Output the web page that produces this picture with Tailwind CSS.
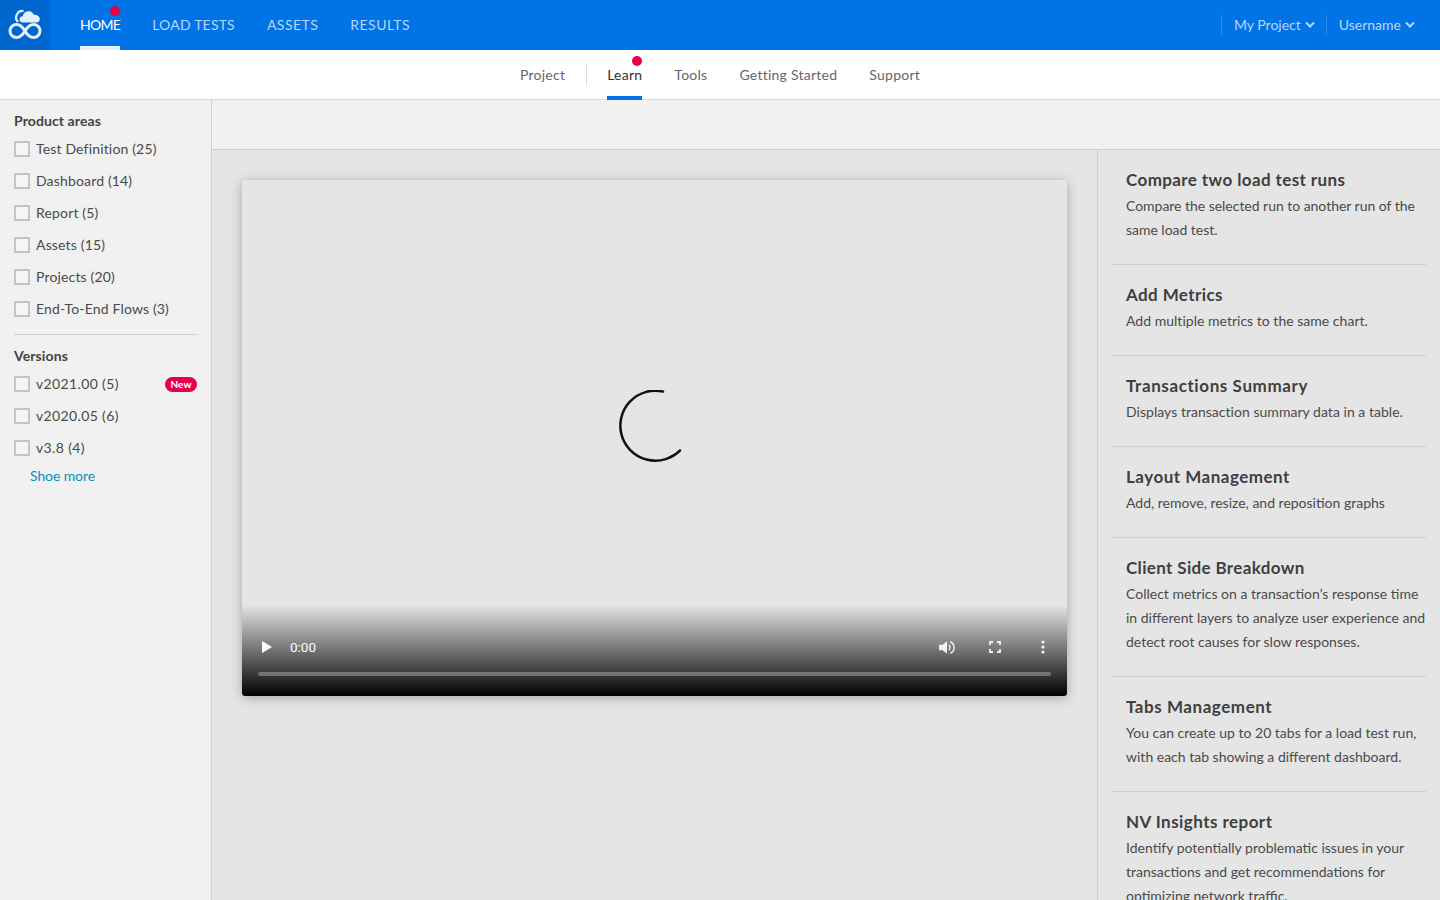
<!DOCTYPE html>
<html lang="en">
<head>
  <meta charset="UTF-8" />
  <title>Learn</title>
  <script src="https://cdn.jsdelivr.net/npm/@tailwindcss/browser@4"></script>
</head>
<body class="h-screen overflow-hidden bg-[#e5e5e5] font-['Lato',sans-serif] text-[#4a4a4a]">

  <!-- Top bar -->
  <header class="h-[50px] bg-[#0073e7] flex items-center text-[14px] text-[#b9d6f7]">
    <div class="w-[50px] h-full bg-[#0067cf]">
      <svg width="50" height="50" viewBox="0 0 50 50" fill="none">
        <path d="M18 22a6.500 6.500 0 0 1 5.500-11" stroke="#e6f0fc" stroke-width="2.200"/>
        <path d="M23 22.500c-2.500 0-3.500-1.500-3.500-3 0-2 1.500-3.200 3.200-3.200 .5-3.300 3.300-5.300 6.300-5 2.400.2 4 1.600 4.800 3.500 3-.3 6 1.500 6 4.300 0 2-1.300 3.400-3.300 3.400z" fill="#e6f0fc"/>
        <path d="M25 31c-3-5-5-6.500-8.500-6.500a6.500 6.500 0 0 0 0 13c3.500 0 5.500-1.500 8.500-6.500s5-6.500 8.500-6.500a6.500 6.500 0 0 1 0 13c-3.500 0-5.500-1.500-8.500-6.500z" stroke="#e6f0fc" stroke-width="3"/>
      </svg>
    </div>
    <nav class="flex ml-[30px] gap-8 h-full">
      <a class="relative h-full flex items-center text-white border-b-4 border-[#e6f0fc] pt-[2px] tracking-[-0.7px]">HOME
        <span class="absolute top-[6px] right-0 w-[10px] h-[10px] rounded-full bg-[#e5004c]"></span>
      </a>
      <a class="flex items-center pb-[2px] tracking-[0.2px]">LOAD TESTS</a>
      <a class="flex items-center pb-[2px] tracking-[0.45px]">ASSETS</a>
      <a class="flex items-center pb-[2px] tracking-[0.5px]">RESULTS</a>
    </nav>
    <div class="ml-auto flex items-center pr-[25px]">
      <div class="flex items-center gap-1 h-5 border-l border-[#2a8bee] pl-3 pr-[11px] pb-[2px]">My Project
        <svg width="10" height="7" viewBox="0 0 10 7" fill="none"><path d="M1 1.500l4 4 4-4" stroke="#b9d6f7" stroke-width="2"/></svg>
      </div>
      <div class="flex items-center gap-1 h-5 border-l border-[#2a8bee] pl-3 pb-[2px]">Username
        <svg width="10" height="7" viewBox="0 0 10 7" fill="none"><path d="M1 1.500l4 4 4-4" stroke="#b9d6f7" stroke-width="2"/></svg>
      </div>
    </div>
  </header>

  <!-- Sub navigation -->
  <div class="h-[50px] bg-white border-b border-[#dcdcdc] flex justify-center text-[14px] text-[#656668] tracking-[0.25px]">
    <a class="flex items-center">Project</a>
    <div class="self-center w-px h-[22px] bg-[#dcdcdc] ml-[21px] mr-5"></div>
    <a class="relative flex items-center text-[#333333] border-b-4 border-[#0073e7] pt-[3px] -mb-px">Learn
      <span class="absolute top-[6px] right-0 w-[10px] h-[10px] rounded-full bg-[#e5004c]"></span>
    </a>
    <a class="flex items-center ml-8">Tools</a>
    <a class="flex items-center ml-8">Getting Started</a>
    <a class="flex items-center ml-8">Support</a>
  </div>

  <div class="flex h-[800px]">
    <!-- Filters -->
    <aside class="w-[212px] shrink-0 bg-[#f1f1f1] border-r border-[#d0d0d0] px-[14px] text-[14px]">
      <h3 class="mt-[11px] h-5 leading-5 font-bold text-[#434343] text-[14px] tracking-[0.1px]">Product areas</h3>
      <div class="mt-[2px] tracking-[0.16px]">
        <label class="flex items-center h-8 gap-[6px]"><span class="w-4 h-4 border-2 border-[#c4c4c4] bg-[#f5f5f5]"></span><span class="pb-[2px]">Test Definition (25)</span></label>
        <label class="flex items-center h-8 gap-[6px]"><span class="w-4 h-4 border-2 border-[#c4c4c4] bg-[#f5f5f5]"></span><span class="pb-[2px]">Dashboard (14)</span></label>
        <label class="flex items-center h-8 gap-[6px]"><span class="w-4 h-4 border-2 border-[#c4c4c4] bg-[#f5f5f5]"></span><span class="pb-[2px]">Report (5)</span></label>
        <label class="flex items-center h-8 gap-[6px]"><span class="w-4 h-4 border-2 border-[#c4c4c4] bg-[#f5f5f5]"></span><span class="pb-[2px]">Assets (15)</span></label>
        <label class="flex items-center h-8 gap-[6px]"><span class="w-4 h-4 border-2 border-[#c4c4c4] bg-[#f5f5f5]"></span><span class="pb-[2px]">Projects (20)</span></label>
        <label class="flex items-center h-8 gap-[6px]"><span class="w-4 h-4 border-2 border-[#c4c4c4] bg-[#f5f5f5]"></span><span class="pb-[2px]">End-To-End Flows (3)</span></label>
      </div>
      <div class="mt-[9px] border-t border-[#d0d0d0]"></div>
      <h3 class="mt-[11px] h-5 leading-5 font-bold text-[#434343] text-[14px] tracking-[0.1px]">Versions</h3>
      <div class="mt-[2px] tracking-[0.36px]">
        <label class="flex items-center h-8 gap-[6px]"><span class="w-4 h-4 border-2 border-[#c4c4c4] bg-[#f5f5f5]"></span><span class="pb-[2px]">v2021.00 (5)</span>
          <span class="ml-auto h-[15px] w-8 rounded-full bg-[#e5004c] text-white text-[10px] font-bold leading-[15px] text-center tracking-normal">New</span>
        </label>
        <label class="flex items-center h-8 gap-[6px]"><span class="w-4 h-4 border-2 border-[#c4c4c4] bg-[#f5f5f5]"></span><span class="pb-[2px]">v2020.05 (6)</span></label>
        <label class="flex items-center h-8 gap-[6px]"><span class="w-4 h-4 border-2 border-[#c4c4c4] bg-[#f5f5f5]"></span><span class="pb-[2px]">v3.8 (4)</span></label>
      </div>
      <a class="block ml-4 h-6 leading-6 text-[#0b8eb8] tracking-[-0.1px]">Shoe more</a>
    </aside>

    <div class="flex-1 min-w-0 flex flex-col">
      <div class="h-[50px] shrink-0 bg-[#f1f1f1] border-b border-[#d0d0d0]"></div>
      <div class="flex flex-1 min-h-0">
        <!-- Video -->
        <main class="flex-1 min-w-0 px-[30px] pt-[30px]">
          <div class="relative h-[516px] rounded-[3px] bg-[#e5e5e5] shadow-[0_2px_12px_rgba(0,0,0,0.28)] overflow-hidden">
            <div class="h-[490px] flex items-center justify-center pr-[1px]">
              <svg width="72" height="72" viewBox="0 0 72 72" fill="none" class="mt-[1px] ml-[2px]">
                <path d="M44 1.500A35 35 0 1 0 61 60.500" stroke="#111" stroke-width="2.500" stroke-linecap="round"/>
              </svg>
            </div>
            <div class="absolute inset-x-0 bottom-0 h-[91px] bg-gradient-to-b from-black/0 to-black">
              <div class="flex items-center h-[20px] mt-[32px] pl-5 pr-4 text-white text-[13.500px] font-['Roboto',sans-serif]">
                <svg width="10" height="12" viewBox="0 0 10 12"><path d="M0 0l10 6-10 6z" fill="#fff"/></svg>
                <span class="ml-[18px]">0:00</span>
                <svg class="ml-auto" width="16" height="15" viewBox="0 0 18 16" fill="none"><path d="M0 5h4l5-4v14l-5-4H0z" fill="#f1f1f1"/><path d="M11 5a4 4 0 0 1 0 6" stroke="#f1f1f1" stroke-width="1.600"/><path d="M12.500 1.500a7 7 0 0 1 0 13" stroke="#f1f1f1" stroke-width="1.600"/></svg>
                <svg class="ml-[34px]" width="12" height="12" viewBox="0 0 12 12" fill="none"><path d="M1 4V1h3M8 1h3v3M11 8v3H8M4 11H1V8" stroke="#f1f1f1" stroke-width="1.800"/></svg>
                <svg class="ml-[40px] mr-[6px]" width="4" height="14" viewBox="0 0 4 14"><circle cx="2" cy="2" r="1.600" fill="#f1f1f1"/><circle cx="2" cy="7" r="1.600" fill="#f1f1f1"/><circle cx="2" cy="12" r="1.600" fill="#f1f1f1"/></svg>
              </div>
              <div class="mx-4 mt-[15px] h-1 rounded-full bg-white/30"></div>
            </div>
          </div>
        </main>

        <!-- Release notes -->
        <section class="w-[343px] shrink-0 border-l border-[#d0d0d0] px-[14px] overflow-hidden">
          <article class="border-b border-[#cfcfcf] pl-[14px] pt-[18px] pb-[22px]">
            <h2 class="h-6 leading-6 text-[17px] font-bold text-[#3f3f3f] tracking-[0.4px]">Compare two load test runs</h2>
            <p class="mt-[2px] text-[14px] leading-6 tracking-[-0.03px]">Compare the selected run to another run of the same load test.</p>
          </article>
          <article class="border-b border-[#cfcfcf] pl-[14px] pt-[18px] pb-[22px]">
            <h2 class="h-6 leading-6 text-[17px] font-bold text-[#3f3f3f] tracking-[0.4px]">Add Metrics</h2>
            <p class="mt-[2px] text-[14px] leading-6 tracking-[0.02px]">Add multiple metrics to the same chart.</p>
          </article>
          <article class="border-b border-[#cfcfcf] pl-[14px] pt-[18px] pb-[22px]">
            <h2 class="h-6 leading-6 text-[17px] font-bold text-[#3f3f3f] tracking-[0.6px]">Transactions Summary</h2>
            <p class="mt-[2px] text-[14px] leading-6 tracking-[0.03px]">Displays transaction summary data in a table.</p>
          </article>
          <article class="border-b border-[#cfcfcf] pl-[14px] pt-[18px] pb-[22px]">
            <h2 class="h-6 leading-6 text-[17px] font-bold text-[#3f3f3f] tracking-[0.5px]">Layout Management</h2>
            <p class="mt-[2px] text-[14px] leading-6">Add, remove, resize, and reposition graphs</p>
          </article>
          <article class="border-b border-[#cfcfcf] pl-[14px] pt-[18px] pb-[22px]">
            <h2 class="h-6 leading-6 text-[17px] font-bold text-[#3f3f3f] tracking-[0.35px]">Client Side Breakdown</h2>
            <p class="mt-[2px] text-[14px] leading-6">Collect metrics on a transaction’s response time<br>in different layers to analyze user experience and<br>detect root causes for slow responses.</p>
          </article>
          <article class="border-b border-[#cfcfcf] pl-[14px] pt-[18px] pb-[22px]">
            <h2 class="h-6 leading-6 text-[17px] font-bold text-[#3f3f3f] tracking-[0.55px]">Tabs Management</h2>
            <p class="mt-[2px] text-[14px] leading-6">You can create up to 20 tabs for a load test run,<br>with each tab showing a different dashboard.</p>
          </article>
          <article class="pl-[14px] pt-[18px] pb-[22px]">
            <h2 class="h-6 leading-6 text-[17px] font-bold text-[#3f3f3f] tracking-[0.45px]">NV Insights report</h2>
            <p class="mt-[2px] text-[14px] leading-6">Identify potentially problematic issues in your<br>transactions and get recommendations for<br>optimizing network traffic.</p>
          </article>
        </section>
      </div>
    </div>
  </div>
</body>
</html>
